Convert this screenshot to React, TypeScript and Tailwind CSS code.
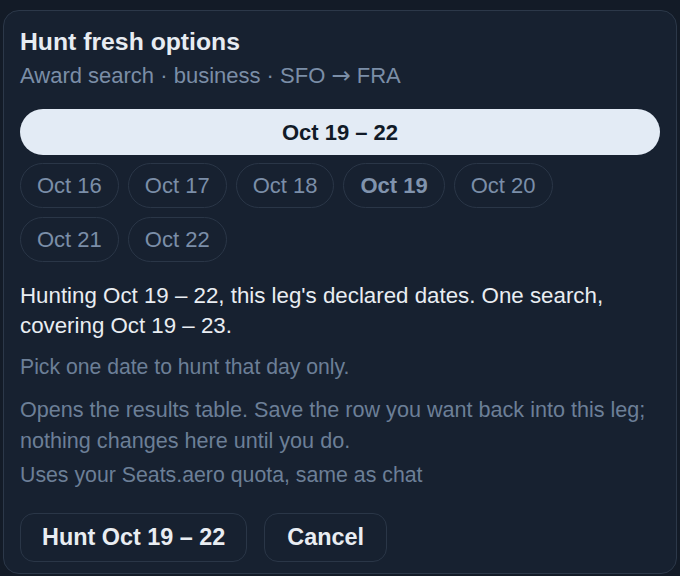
const days = ["Oct 16", "Oct 17", "Oct 18", "Oct 19", "Oct 20", "Oct 21", "Oct 22"];

export default function App() {
  const picked = "Oct 19";

  return (
    <div
      className="min-h-[576px] w-[680px] overflow-hidden bg-[#131b27] pl-[3px] pt-[10px]"
      style={{ fontFamily: '"Liberation Sans", Arial, sans-serif' }}
    >
      <div className="w-[674px] rounded-[16px] border border-[#2c3849] bg-[#172130] px-[16px] pt-[15px] pb-[11px]">
        <h2 className="text-[24.75px] leading-[32px] font-bold text-[#e7ecf2]">Hunt fresh options</h2>
        <p className="mt-[3px] h-[30px] text-[22px] leading-[30px] text-[#7b8ea7]">
          Award search · business · SFO{" "}
          <span className="text-[23px] leading-none" style={{ fontFamily: '"DejaVu Sans", sans-serif' }}>
            →
          </span>{" "}
          FRA
        </p>

        <button className="mt-[18px] flex h-[46px] w-full items-center justify-center rounded-full bg-[#e3ebf5] text-[22px] font-bold text-[#111a27]">
          Oct 19 – 22
        </button>

        <div className="mt-[8px] flex max-w-[620px] flex-wrap gap-[9px]">
          {days.map((d) => (
            <button
              key={d}
              className={
                d === picked
                  ? "h-[45px] rounded-full border border-[#2a3647] px-[16px] text-[22px] font-bold text-[#8093ad]"
                  : "h-[45px] rounded-full border border-[#2a3647] px-[16px] text-[22px] text-[#7b8ea8]"
              }
            >
              {d}
            </button>
          ))}
        </div>

        <p className="mt-[19px] text-[22.3px] leading-[30px] text-[#e9edf2]">
          Hunting Oct 19 – 22, this leg's declared dates. One search, covering Oct 19 – 23.
        </p>
        <p className="mt-[11px] text-[21.2px] leading-[30px] text-[#6c7f97]">Pick one date to hunt that day only.</p>
        <p className="mt-[12px] text-[21.6px] leading-[31px] text-[#6c7f97]">
          Opens the results table. Save the row you want back into this leg; nothing changes here until you do.
        </p>
        <p className="mt-[4px] text-[21.3px] leading-[31px] text-[#6c7f97]">Uses your Seats.aero quota, same as chat</p>

        <div className="mt-[22px] flex gap-[17px]">
          <button className="h-[49px] rounded-[14px] border border-[#2a3647] px-[21px] text-[23.4px] font-bold text-[#e9edf2]">
            Hunt Oct 19 – 22
          </button>
          <button className="h-[49px] rounded-[14px] border border-[#2a3647] px-[22px] text-[23.4px] font-bold text-[#e9edf2]">
            Cancel
          </button>
        </div>
      </div>
    </div>
  );
}
